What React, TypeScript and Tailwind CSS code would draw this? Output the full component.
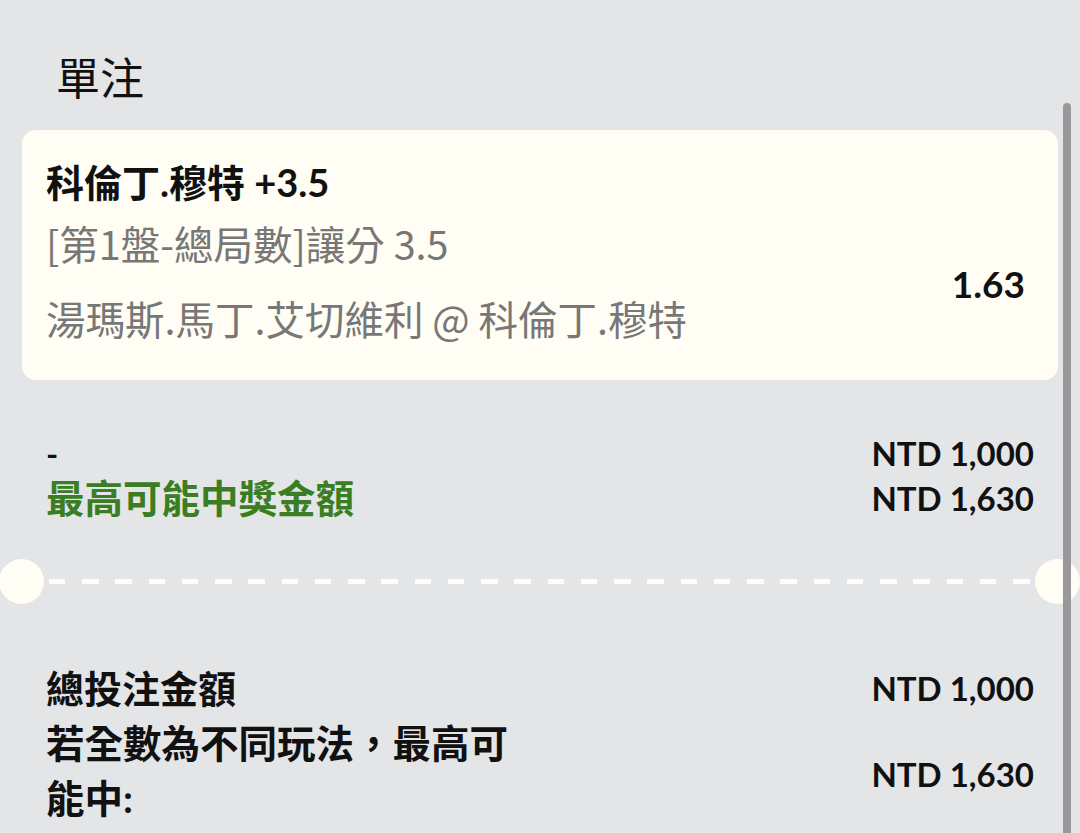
import React from "react";

const latin = "font-['Lato','Noto_Sans_CJK_TC',sans-serif]";
const cjk = "font-['Noto_Sans_CJK_TC','Lato',sans-serif]";

export default function App() {
  return (
    <div className="relative h-[833px] w-[1080px] overflow-hidden bg-[#e4e5e7] text-[#111]">
      {/* Header */}
      <div className="pt-[50px] pl-[56px]">
        <h1 className={`${cjk} text-[44px] leading-[52px] font-normal`}>單注</h1>
      </div>

      {/* Bet card */}
      <div className="mx-[22px] mt-[28px] rounded-[14px] bg-[#fffdf4] pl-[24px] pr-[33px] pt-[28px] pb-[38px]">
        <div className={`${latin} text-[38px] leading-[48px] font-bold`}>科倫丁.穆特 +3.5</div>
        <div className="flex items-center justify-between">
          <div className={`${cjk} text-[39.5px] text-[#777]`}>
            <div className="mt-[13px] leading-[48px]">[第1盤-總局數]讓分 3.5</div>
            <div className="mt-[27px] leading-[48px]">湯瑪斯.馬丁.艾切維利 @ 科倫丁.穆特</div>
          </div>
          <div className={`${latin} pt-[20px] text-[37px] font-bold`}>1.63</div>
        </div>
      </div>

      {/* Stake / potential win */}
      <div className={`${latin} mt-[51px] px-[46px] text-[33px] font-bold`}>
        <div className="flex items-center justify-between leading-[45px]">
          <span>-</span>
          <span>NTD 1,000</span>
        </div>
        <div className="flex items-center justify-between leading-[45px]">
          <span className="text-[38.5px] text-[#3a7d22]">最高可能中獎金額</span>
          <span>NTD 1,630</span>
        </div>
      </div>

      {/* Ticket divider */}
      <div className="mt-[38px] flex h-[45px] items-center">
        <div className="ml-[-1px] h-[45px] w-[45px] shrink-0 rounded-full bg-[#fffdf4]" />
        <div className="mx-[5px] h-[5px] flex-1 bg-[repeating-linear-gradient(to_right,#fffdf4_0_16.5px,transparent_16.5px_33.25px)]" />
        <div className="h-[45px] w-[45px] shrink-0 rounded-full bg-[#fffdf4]" />
      </div>

      {/* Totals */}
      <div className={`${latin} mt-[57px] px-[46px] font-bold`}>
        <div className="flex items-center justify-between">
          <span className="text-[38px] leading-[55px]">總投注金額</span>
          <span className="text-[33px]">NTD 1,000</span>
        </div>
        <div className="flex items-center justify-between">
          <span className="w-[480px] text-[38.5px] leading-[55px]">若全數為不同玩法，最高可能中:</span>
          <span className="pt-[8px] text-[33px]">NTD 1,630</span>
        </div>
      </div>

      {/* Scrollbar */}
      <div className="absolute top-[103px] bottom-0 left-[1063px] w-[8px] rounded-t-full bg-[#99999b]" />
    </div>
  );
}
